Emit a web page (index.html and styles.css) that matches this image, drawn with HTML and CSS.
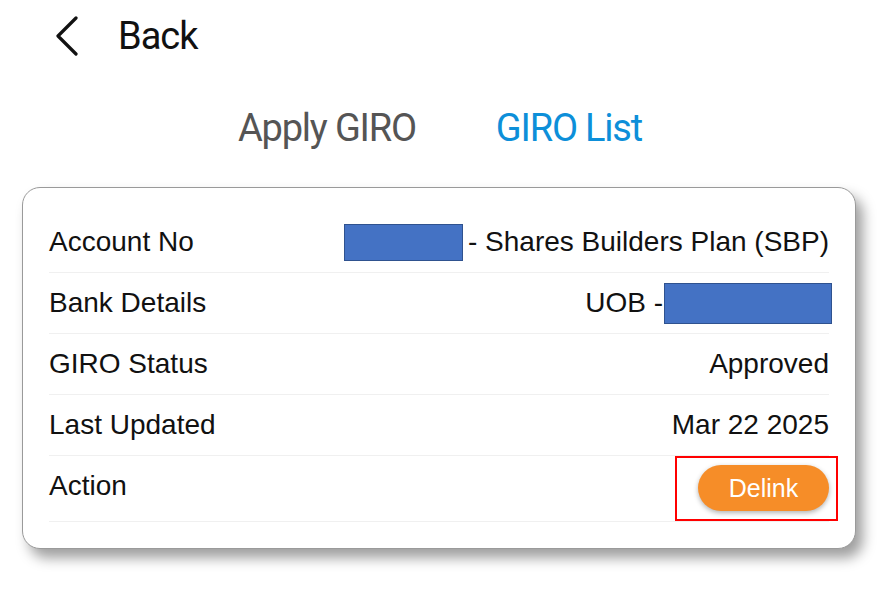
FILE: index.html
```html
<!DOCTYPE html>
<html>
<head>
<meta charset="utf-8">
<link rel="stylesheet" href="styles.css">
</head>
<body>
<header class="topbar">
  <svg class="chev" width="24" height="40" viewBox="0 0 24 40"><path d="M21 2 L3 20 L21 38" fill="none" stroke="#111" stroke-width="3.2" stroke-linecap="round" stroke-linejoin="round"/></svg>
  <span class="back">Back</span>
</header>
<nav class="tabs">
  <span class="tab">Apply GIRO</span>
  <span class="tab active">GIRO List</span>
</nav>
<section class="card">
  <div class="row"><span class="label">Account No</span><span class="value"><span class="redact r1"></span>- Shares Builders Plan (SBP)</span></div>
  <div class="row"><span class="label">Bank Details</span><span class="value">UOB -<span class="redact r2"></span></span></div>
  <div class="row"><span class="label">GIRO Status</span><span class="value">Approved</span></div>
  <div class="row"><span class="label">Last Updated</span><span class="value">Mar 22 2025</span></div>
  <div class="row last"><span class="label">Action</span><span class="value"><span class="btnwrap"><button class="delink">Delink</button><span class="mark"></span></span></span></div>
</section>
</body>
</html>
```
FILE: styles.css
```css
html, body { margin: 0; padding: 0; background: #fff; }
body { width: 889px; height: 595px; overflow: hidden; font-family: "Liberation Sans", Arial, sans-serif; }
.topbar { display: flex; align-items: center; height: 72px; padding-left: 55px; }
.chev { display: block; }
.back { font-family: Roboto, sans-serif; font-size: 38px; letter-spacing: -1px; color: #111; margin-left: 39px; }
.tabs { display: flex; justify-content: center; gap: 80px; margin-top: 34px; padding-right: 9px; line-height: 44px; height: 44px; }
.tab { font-family: Roboto, sans-serif; font-size: 38px; letter-spacing: -1.2px; color: #555; }
.tab.active { color: #0d8fd9; }
.card { margin: 37px 0 0 22px; width: 834px; box-sizing: border-box; border: 1px solid #9a9a9a; border-radius: 18px; background: #fff; padding: 24px 26px 26px 26px; box-shadow: 7px 9px 13px rgba(0,0,0,0.38); }
.row { display: flex; justify-content: space-between; align-items: center; height: 60px; border-bottom: 1px solid #f0f0f0; font-size: 28px; color: #111; }
.row.last { height: 65px; align-items: flex-start; }
.row.last .label { margin-top: 14px; }
.row.last .value { margin-top: 9px; }
.value { display: flex; align-items: center; }
.redact { display: inline-block; background: #4472c4; border: 1.5px solid #2f528f; box-sizing: border-box; }
.r1 { width: 119px; height: 37px; margin-right: 5px; }
.r2 { width: 168px; height: 41px; margin-left: 1px; margin-right: -3px; }
.btnwrap { position: relative; display: inline-block; }
.delink { display: block; width: 131px; height: 46px; border: none; border-radius: 23px; background: #f68d28; color: #fff; font-family: "Liberation Sans", Arial, sans-serif; font-size: 25px; padding: 0; box-shadow: 0 2px 5px rgba(0,0,0,0.3); }
.mark { position: absolute; top: -9px; bottom: -10px; left: -23px; right: -9px; border: 2px solid #f00; }
```
